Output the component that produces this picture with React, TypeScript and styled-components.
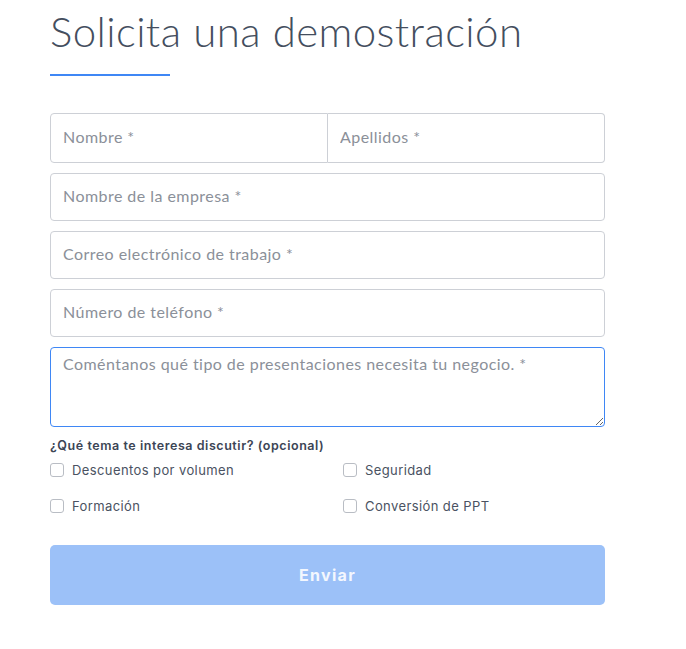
import React from 'react';
import styled, { createGlobalStyle } from 'styled-components';

const GlobalStyle = createGlobalStyle`
  body {
    margin: 0;
    background: #ffffff;
    font-family: "Lato", "Open Sans", sans-serif;
  }
`;

const Page = styled.div`
  width: 555px;
  padding: 6px 0 0 50px;
`;

const Title = styled.h1`
  margin: 0;
  font-family: "Lato", sans-serif;
  font-weight: 300;
  font-size: 42px;
  letter-spacing: 0.4px;
  line-height: 50px;
  color: #444e5e;
`;

const Rule = styled.div`
  width: 120px;
  height: 2px;
  background: #3f87f5;
  margin: 18px 0 37px;
`;

const Form = styled.form`
  display: flex;
  flex-direction: column;
  gap: 10px;
`;

const Row = styled.div`
  display: flex;
  flex: none;
`;

const Field = styled.input<{ $side?: 'left' | 'right' }>`
  box-sizing: border-box;
  flex: ${p => (p.$side ? '1 1 0' : 'none')};
  min-width: 0;
  width: 100%;
  height: ${p => (p.$side ? '50px' : '48px')};
  padding: 0 12px 3px;
  border: 1px solid #cdd0d6;
  border-radius: ${p => (p.$side === 'left' ? '4px 0 0 4px' : p.$side === 'right' ? '0 4px 4px 0' : '4px')};
  border-left-width: ${p => (p.$side === 'right' ? '0' : '1px')};
  font-family: "Lato", sans-serif;
  font-size: 16px;
  letter-spacing: 0.45px;
  color: #333;
  outline: none;

  &::placeholder {
    color: #8b9099;
  }
`;

const Message = styled.textarea`
  box-sizing: border-box;
  flex: none;
  width: 100%;
  height: 80px;
  padding: 6px 12px;
  border: 1px solid #3f87f5;
  border-radius: 4px;
  font-family: "Lato", sans-serif;
  font-size: 16px;
  letter-spacing: 0.45px;
  outline: none;
  resize: vertical;

  &::placeholder {
    color: #8b9099;
  }
`;

const Topics = styled.div`
  margin-top: 1px;
`;

const TopicLabel = styled.div`
  font-family: "Inter", sans-serif;
  font-weight: 600;
  font-size: 12.5px;
  letter-spacing: 0.55px;
  color: #3c4555;
  margin-bottom: 7px;
`;

const TopicGrid = styled.div`
  display: grid;
  grid-template-columns: 293px 1fr;
  row-gap: 16px;
`;

const Option = styled.label`
  display: flex;
  align-items: center;
  gap: 8px;
  font-family: "Inter", sans-serif;
  font-size: 13px;
  letter-spacing: 0.4px;
  color: #4a5262;
  height: 20px;
`;

const Box = styled.span`
  box-sizing: border-box;
  width: 14px;
  height: 14px;
  border: 1px solid #b9bdc4;
  border-radius: 3px;
  background: #fff;
`;

const Submit = styled.button`
  flex: none;
  margin-top: 19px;
  height: 60px;
  width: 100%;
  border: none;
  border-radius: 5px;
  background: #9cc1f8;
  color: #f3f7fe;
  font-family: "Inter", sans-serif;
  font-weight: 700;
  font-size: 16px;
  letter-spacing: 1.3px;
`;

const topics = ['Descuentos por volumen', 'Seguridad', 'Formación', 'Conversión de PPT'];

export default function App() {
  return (
    <Page>
      <GlobalStyle />
      <Title>Solicita una demostración</Title>
      <Rule />
      <Form onSubmit={e => e.preventDefault()}>
        <Row>
          <Field $side="left" placeholder="Nombre *" />
          <Field $side="right" placeholder="Apellidos *" />
        </Row>
        <Field placeholder="Nombre de la empresa *" />
        <Field placeholder="Correo electrónico de trabajo *" />
        <Field placeholder="Número de teléfono *" />
        <Message placeholder="Coméntanos qué tipo de presentaciones necesita tu negocio. *" />
        <Topics>
          <TopicLabel>¿Qué tema te interesa discutir? (opcional)</TopicLabel>
          <TopicGrid>
            {topics.map(t => (
              <Option key={t}>
                <Box />
                {t}
              </Option>
            ))}
          </TopicGrid>
        </Topics>
        <Submit type="submit" disabled>Enviar</Submit>
      </Form>
    </Page>
  );
}
